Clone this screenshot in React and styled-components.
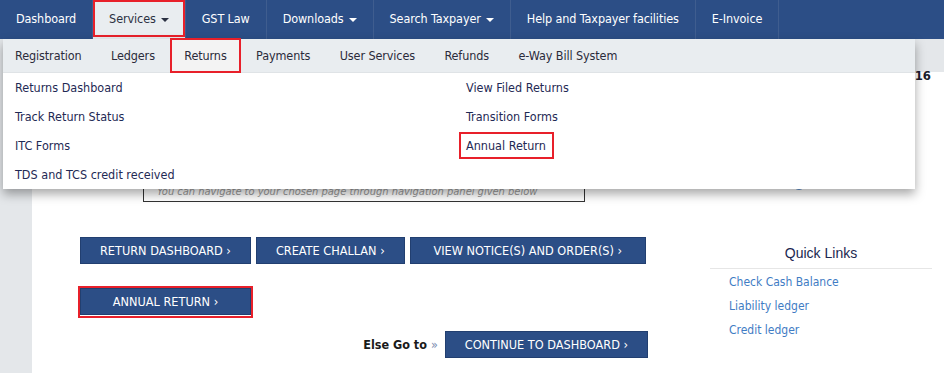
import React from 'react';
import styled, { createGlobalStyle, css } from 'styled-components';

const GlobalStyle = createGlobalStyle`
    body {
        margin: 0;
        background: #fff;
        font-family: "DejaVu Sans Condensed", "DejaVu Sans", sans-serif;
    }
`;

const NAV = ['Dashboard', 'Services', 'GST Law', 'Downloads', 'Search Taxpayer', 'Help and Taxpayer facilities', 'E-Invoice'];
const CARET = ['Services', 'Downloads', 'Search Taxpayer'];
const SUBNAV = ['Registration', 'Ledgers', 'Returns', 'Payments', 'User Services', 'Refunds', 'e-Way Bill System'];
const LEFT_LINKS = ['Returns Dashboard', 'Track Return Status', 'ITC Forms', 'TDS and TCS credit received'];
const RIGHT_LINKS = ['View Filed Returns', 'Transition Forms', 'Annual Return'];
const QUICK = ['Check Cash Balance', 'Liability ledger', 'Credit ledger'];

const RED = '#e8202a';
const BLUE = '#2c4e86';

const highlight = css`
    &::after {
        content: '';
        position: absolute;
        border: 2px solid ${RED};
        pointer-events: none;
    }
`;

class App extends React.Component {
    render() {
        return (
            <Page>
                <GlobalStyle />
                <Navbar>
                    {NAV.map(item => (
                        <NavItem key={item} active={item === 'Services'}>
                            {item}
                            {CARET.includes(item) && <Caret />}
                        </NavItem>
                    ))}
                </Navbar>
                <SubBar />
                <Body>
                    <Gutter />
                    <Main>
                        <InfoLine>Last logged in on 02/07/2016</InfoLine>
                        <IntroRow>
                            <NoticeBox>You can navigate to your chosen page through navigation panel given below</NoticeBox>
                            <Profile>View Profile <ProfileDot /></Profile>
                        </IntroRow>
                        <Content>
                            <Actions>
                                <ButtonRow>
                                    <ActionButton>Return Dashboard ›</ActionButton>
                                    <ActionButton>Create Challan ›</ActionButton>
                                    <ActionButton minWidth={236}>View Notice(s) and Order(s) ›</ActionButton>
                                </ButtonRow>
                                <ButtonRow>
                                    <ActionButton marked minWidth={171}>Annual Return ›</ActionButton>
                                </ButtonRow>
                                <ButtonRow end>
                                    <ElseText>Else Go to <Chevrons>»</Chevrons></ElseText>
                                    <ActionButton>Continue to Dashboard ›</ActionButton>
                                </ButtonRow>
                            </Actions>
                            <QuickLinks>
                                <QuickTitle>Quick Links</QuickTitle>
                                {QUICK.map(link => <QuickLink key={link}>{link}</QuickLink>)}
                            </QuickLinks>
                        </Content>
                    </Main>
                </Body>
                <Dropdown>
                    <DropBar>
                        {SUBNAV.map(item => (
                            <SubItem key={item} active={item === 'Returns'}>{item}</SubItem>
                        ))}
                    </DropBar>
                    <DropColumns>
                        <DropColumn>
                            {LEFT_LINKS.map(link => <DropLink key={link}>{link}</DropLink>)}
                        </DropColumn>
                        <DropColumn>
                            {RIGHT_LINKS.map(link => (
                                <DropLink key={link} marked={link === 'Annual Return'}>{link}</DropLink>
                            ))}
                        </DropColumn>
                    </DropColumns>
                </Dropdown>
            </Page>
        );
    }
}

const Page = styled.div`
    position: relative;
    width: 944px;
    height: 373px;
    overflow: hidden;
    background: #fff;
`

const Navbar = styled.nav`
    display: flex;
    height: 39px;
    background: ${BLUE};
`

const NavItem = styled.div`
    position: relative;
    display: flex;
    align-items: center;
    padding: 0 16px 2px 16px;
    font-size: 12.5px;
    letter-spacing: -0.1px;
    color: ${p => p.active ? '#2b3142' : '#fff'};
    background: ${p => p.active ? '#e9edf0' : 'transparent'};
    border-right: 1px solid #3f5d8f;
    white-space: nowrap;
    ${p => p.active && highlight}
    &::after {
        top: 0;
        left: 0;
        right: 0;
        bottom: 2px;
    }
`

const Caret = styled.span`
    display: inline-block;
    margin-left: 5px;
    margin-top: 2px;
    border-top: 4px solid currentColor;
    border-left: 4px solid transparent;
    border-right: 4px solid transparent;
`

const SubBar = styled.div`
    height: 33px;
    background: #e4e7ea;
`

const Body = styled.div`
    display: flex;
    height: 301px;
`

const Gutter = styled.div`
    width: 32px;
    flex: none;
    background: #e4e7ea;
`

const Main = styled.div`
    flex: 1;
    min-width: 0;
    display: flex;
    flex-direction: column;
`

const InfoLine = styled.div`
    align-self: flex-end;
    margin-right: 13px;
    margin-top: -4px;
    font-size: 13px;
    font-weight: bold;
    color: #1c1c2c;
    white-space: nowrap;
`

const IntroRow = styled.div`
    display: flex;
    align-items: flex-end;
    margin-top: 67px;
    height: 52px;
`

const NoticeBox = styled.div`
    box-sizing: border-box;
    width: 442px;
    height: 100%;
    margin-left: 111px;
    padding: 0 0 3px 13px;
    display: flex;
    align-items: flex-end;
    border: 1px solid #333;
    font-size: 11px;
    font-style: italic;
    color: #9a9a9a;
    white-space: nowrap;
`

const Profile = styled.div`
    display: flex;
    align-items: center;
    margin-left: 140px;
    margin-bottom: 11px;
    font-size: 12px;
    color: #777;
`

const ProfileDot = styled.span`
    width: 12px;
    height: 12px;
    margin-left: 5px;
    border-radius: 50%;
    background: #5b8fd0;
`

const Content = styled.div`
    display: flex;
    margin-top: 35px;
`

const Actions = styled.div`
    display: flex;
    flex-direction: column;
    flex: none;
    margin-left: 48px;
    width: 568px;
`

const ButtonRow = styled.div`
    display: flex;
    align-items: center;
    gap: 5px;
    justify-content: ${p => p.end ? 'flex-end' : 'flex-start'};
    margin-bottom: ${p => p.end ? 0 : '24px'};
    & + & + & {
        margin-top: -8px;
    }
`

const ActionButton = styled.button`
    position: relative;
    height: 27px;
    min-width: ${p => p.minWidth ? `${p.minWidth}px` : 'auto'};
    padding: 0 19px;
    background: ${BLUE};
    border: 1px solid #223f70;
    color: #fff;
    font-family: "DejaVu Sans Condensed", "DejaVu Sans", sans-serif;
    font-size: 12.6px;
    text-transform: uppercase;
    white-space: nowrap;
    ${p => p.marked && highlight}
    &::after {
        top: -3px;
        left: -3px;
        right: -3px;
        bottom: -4px;
    }
`

const ElseText = styled.span`
    margin-right: 2px;
    font-size: 12.5px;
    font-weight: bold;
    color: #1a1a1a;
`

const Chevrons = styled.span`
    font-weight: normal;
    color: #7a8db0;
`

const QuickLinks = styled.div`
    display: flex;
    flex-direction: column;
    width: 222px;
    flex: none;
    margin-left: 62px;
`

const QuickTitle = styled.div`
    padding: 8px 0 7px;
    border-bottom: 1px solid #e6e6e6;
    text-align: center;
    font-family: "Liberation Sans", Arial, sans-serif;
    font-size: 14px;
    color: #1b2750;
    margin-bottom: 1px;
`

const QuickLink = styled.a`
    padding-left: 19px;
    line-height: 24px;
    font-size: 12px;
    color: #3f7cc4;
`

const Dropdown = styled.div`
    position: absolute;
    top: 39px;
    left: 3px;
    width: 912px;
    height: 150px;
    background: #fff;
    box-shadow: 0 5px 10px rgba(0, 0, 0, 0.35);
`

const DropBar = styled.div`
    display: flex;
    height: 33px;
    background: #e9edf0;
    border-bottom: 1px solid #dfe3e6;
`

const SubItem = styled.div`
    position: relative;
    display: flex;
    align-items: center;
    padding: 0 14.7px;
    font-size: 12.5px;
    letter-spacing: -0.1px;
    color: #2b2b3b;
    background: ${p => p.active ? '#f3f3f3' : 'transparent'};
    &:first-child {
        padding-left: 12px;
    }
    ${p => p.active && highlight}
    &::after {
        top: -1px;
        left: 0;
        right: 0;
        bottom: -1px;
    }
`

const DropColumns = styled.div`
    display: grid;
    grid-template-columns: 451px 1fr;
    padding: 1px 0 0 5px;
`

const DropColumn = styled.div`
    display: flex;
    flex-direction: column;
    align-items: flex-start;
    gap: 2px;
`

const DropLink = styled.a`
    position: relative;
    display: flex;
    align-items: center;
    height: 27px;
    padding: 0 7px;
    font-size: 12.5px;
    color: #1f2a55;
    ${p => p.marked && highlight}
    &::after {
        inset: 0 -1px 0 0;
    }
`

export default App;
